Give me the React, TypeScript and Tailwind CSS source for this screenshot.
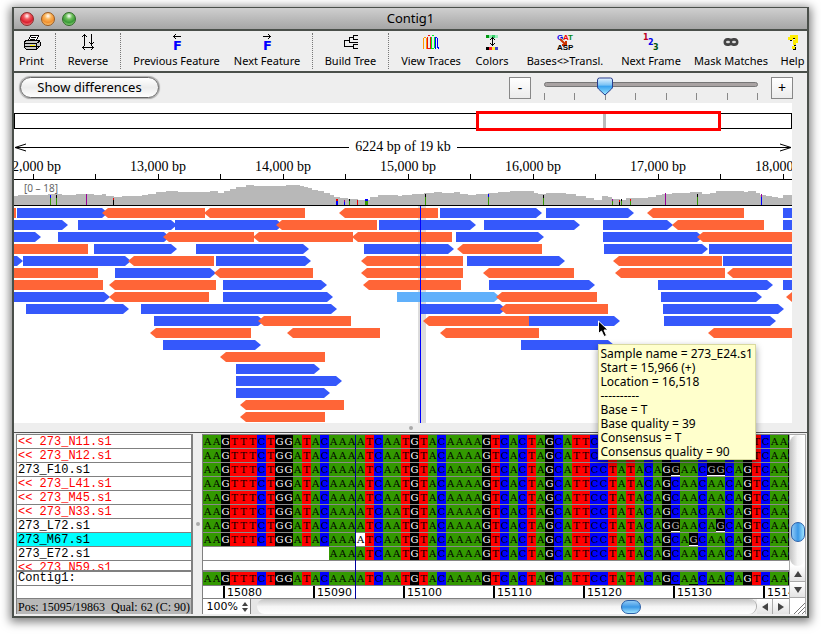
import React, { useState } from 'react'
import clsx from 'clsx';

const PrintIcon = () => (
  <svg width="18" height="17" viewBox="0 0 18 17" shapeRendering="crispEdges">
    <path d="M5 7 L8 1 H16 L13 7 Z" fill="#fff" stroke="#000" />
    <path d="M8 3.5 H13 M7 5.5 H12" stroke="#000" />
    <path d="M1 8 L4 6 H16 L17 8 V12 L14 15 H3 L1 13 Z" fill="#c9c9c9" stroke="#000" />
    <path d="M1 9.5 H13 L17 7 M13.5 9 V15 M2 12.5 H13 M14 12 H17" stroke="#000" fill="none" />
    <path d="M7 11.5 H12" stroke="#ffee00" />
  </svg>
);

const ReverseIcon = () => (
  <svg width="14" height="17" viewBox="0 0 14 17" shapeRendering="crispEdges" fill="none" stroke="#000">
    <path d="M3.5 0 V11 M2 1.5 H5 M1 2.5 H2 M5 2.5 H6" />
    <path d="M10.5 0 V11 M9 9.5 H12 M8 8.5 H9 M12 8.5 H13" />
    <path d="M1 13.5 H13 M2.5 12 V15 M11.5 12 V15 M3.5 11 V12 M3.5 15 V16 M10.5 11 V12 M10.5 15 V16" />
  </svg>
);

const FeatureIcon = ({ next }: { next?: boolean }) => (
  <svg className="overflow-visible" width="16" height="17" viewBox="0 0 16 17">
    <g shapeRendering="crispEdges" stroke="#000" fill="none">
      {next ? (
        <path d="M4 2.5 H12 M10.5 1 V4 M9.5 0 V1 M9.5 4 V5" />
      ) : (
        <path d="M4 2.5 H12 M5.5 1 V4 M6.5 0 V1 M6.5 4 V5" />
      )}
    </g>
    <text x="4" y="16" fill="#0000ff" fontFamily="DejaVu Sans, sans-serif" fontWeight="700" fontSize="13">F</text>
  </svg>
);

const TreeIcon = () => (
  <svg width="16" height="17" viewBox="0 0 16 17" shapeRendering="crispEdges" fill="none" stroke="#000">
    <path d="M15 1.5 H10.5 V5.5 H15 M10 3.5 H6.5 M15 10.5 H10.5 V14.5 H15 M10 12.5 H1.5 V6.5 H6 M6.5 3 V8.5 H15" />
  </svg>
);

const TracesIcon = () => (
  <svg width="18" height="17" viewBox="0 0 18 17" shapeRendering="crispEdges" fill="none">
    <path d="M1.5 15 V4 M2 3.5 H4 M4.5 4 V15" stroke="#ff9900" />
    <path d="M5.5 15 V3 M6 1.5 H8 M8.5 3 V15 M5 14.5 H8" stroke="#ee1111" />
    <path d="M9.5 15 V3 M10 1.5 H12 M12.5 3 V14 M9 14.5 H12" stroke="#00ee22" />
    <path d="M13.5 15 V4 M13 3.5 H15 M15.5 4 V14 M16.5 13 V15" stroke="#0000ff" />
  </svg>
);

const ColorsIcon = () => (
  <svg width="14" height="17" viewBox="0 0 14 17" shapeRendering="crispEdges">
    <path d="M1 1 h3 v3 h-3 z" fill="#009911" />
    <path d="M4 1 h3 v3 h-3 z" fill="#88eeaa" />
    <path d="M7 1 h3 v3 h-3 z" fill="#33cc66" />
    <path d="M10 1 h3 v3 h-3 z" fill="#99eebb" />
    <path d="M7.5 3 V12 M6 4.5 H9 M5 5.5 H6 M9 5.5 H10 M6 10.5 H9 M5 9.5 H6 M9 9.5 H10" stroke="#000" fill="none" />
    <path d="M1 13 h3 v3 h-3 z" fill="#000" />
    <path d="M4 13 h3 v3 h-3 z" fill="#ff2233" />
    <path d="M7 13 h3 v3 h-3 z" fill="#ffee33" />
    <path d="M10 13 h3 v3 h-3 z" fill="#4444cc" />
  </svg>
);

const TranslIcon = () => (
  <svg className="overflow-visible" width="18" height="17" viewBox="0 0 18 17" fontFamily="Liberation Sans, sans-serif" fontWeight="700" fontSize="8">
    <text x="1" y="6" fill="#0000ee">G</text>
    <text x="7" y="6" fill="#ee0000">A</text>
    <text x="12" y="6" fill="#008811">T</text>
    <path d="M4 5 L10 11 M10 7 V11 H6" stroke="#cc3300" strokeWidth="2" fill="none" />
    <text x="1" y="16" fill="#000">ASP</text>
  </svg>
);

const FrameIcon = () => (
  <svg className="overflow-visible" width="18" height="17" viewBox="0 0 18 17" fontFamily="DejaVu Sans, sans-serif" fontWeight="700" fontSize="8">
    <text x="1" y="6" fill="#bb0022">1</text>
    <text x="6" y="11" fill="#0000ee">2</text>
    <text x="11" y="16" fill="#005511">3</text>
  </svg>
);

const MaskIcon = () => (
  <svg width="16" height="17" viewBox="0 0 16 17">
    <path d="M4.5 4 C6.5 4 7 4.6 8 4.6 C9 4.6 9.5 4 11.5 4 C14 4 15.5 6 15.5 8 C15.5 10.5 14 12 11.5 12 C9.5 12 9 11.2 8 11.2 C7 11.2 6.5 12 4.5 12 C2 12 .5 10.5 .5 8 C.5 6 2 4 4.5 4 Z" fill="#444" />
    <ellipse cx="5" cy="8" rx="2" ry="1.3" fill="#ddd" />
    <ellipse cx="11" cy="8" rx="2" ry="1.3" fill="#ddd" />
  </svg>
);

const HelpIcon = () => (
  <svg width="14" height="17" viewBox="0 0 14 17" shapeRendering="crispEdges" fill="none">
    <path d="M3.5 6 V4 H5 V2.5 H10 V7 H8 V11" stroke="#000" strokeWidth="2" transform="translate(1 1)" />
    <path d="M7 13 h3 v3 h-3 z" fill="#000" />
    <path d="M3.5 6 V4 H5 V2.5 H10 V7 H8 V11" stroke="#ffee00" strokeWidth="3" />
    <path d="M6 12 h3 v3 h-3 z" fill="#ffee00" />
  </svg>
);

type Tool = { label: string; icon: React.ReactNode; width: string };

const toolGroups: Tool[][] = [
  [{ label: "Print", icon: <PrintIcon />, width: "w-[25px]" }],
  [{ label: "Reverse", icon: <ReverseIcon />, width: "w-[42px]" }],
  [
    { label: "Previous Feature", icon: <FeatureIcon />, width: "w-[89px]" },
    { label: "Next Feature", icon: <FeatureIcon next />, width: "w-[68px]" },
  ],
  [{ label: "Build Tree", icon: <TreeIcon />, width: "w-[53px]" }],
  [
    { label: "View Traces", icon: <TracesIcon />, width: "w-[62px]" },
    { label: "Colors", icon: <ColorsIcon />, width: "w-9" },
    { label: "Bases<>Transl.", icon: <TranslIcon />, width: "w-[86px]" },
    { label: "Next Frame", icon: <FrameIcon />, width: "w-[62px]" },
    { label: "Mask Matches", icon: <MaskIcon />, width: "w-[74px]" },
    { label: "Help", icon: <HelpIcon />, width: "w-[25px]" },
  ],
];

// map canvas is 778 units wide, 125 units for 1,000 bp
const MAP_WIDTH = 778;
const pct = (x: number) => `${(x / MAP_WIDTH) * 100}%`;

const axis = [12, 13, 14, 15, 16, 17, 18].map((kb, i) => ({ label: `${kb},000 bp`, x: 19 + i * 125 }));
const ticks = [19, 81, 144, 206, 269, 331, 394, 456, 519, 581, 644, 706, 769];

// x, height of the coverage plot
const coverage = [
  [0, 9], [4, 10], [20, 10], [34, 11], [48, 10], [62, 11], [80, 10], [88, 11], [92, 9], [100, 8], [108, 9],
  [120, 9], [128, 10], [134, 11], [142, 13], [152, 14], [164, 13], [184, 13], [196, 14], [204, 12], [210, 14],
  [216, 16], [222, 18], [232, 20], [240, 19], [256, 19], [272, 20], [286, 19], [290, 18], [294, 17], [298, 15],
  [304, 14], [310, 12], [316, 10], [320, 8], [326, 7], [334, 6], [344, 5], [350, 5], [356, 8], [364, 10], [384, 9],
  [388, 10], [398, 11], [410, 12], [420, 13], [428, 12], [440, 13], [446, 11], [454, 10], [462, 11], [474, 12], [484, 13],
  [496, 14], [512, 14], [520, 12], [524, 11], [532, 12], [552, 11], [562, 9], [572, 7], [580, 5], [588, 9],
  [594, 8], [598, 6], [606, 5], [612, 7], [622, 7], [634, 8], [642, 10], [648, 11], [658, 12], [676, 13],
  [688, 11], [696, 12], [702, 14], [730, 13], [734, 14], [742, 12], [746, 10], [752, 9], [758, 8], [764, 7],
  [769, 10], [778, 10],
];

const coveragePath =
  "M0 25 " +
  coverage.map(([x, h]) => `H${x} V${25 - h}`).join(" ") +
  " V25 Z";

// x, width, height, top color, base color
const conflicts: [number, number, number, string, string][] = [
  [36, 1, 10, "#0000ff", "#339900"],
  [42, 1, 10, "#000", "#339900"],
  [72, 1, 11, "#990099", "#990099"],
  [99, 1, 7, "#ee0000", "#000"],
  [322, 2, 6, "#ee0000", "#0000ff"],
  [330, 1, 5, "#990099", "#0000ff"],
  [335, 1, 6, "#000", "#339900"],
  [343, 1, 5, "#ee0000", "#ee0000"],
  [351, 3, 6, "#0000ff", "#339900"],
  [411, 1, 11, "#000", "#339900"],
  [474, 1, 11, "#0000ff", "#339900"],
  [529, 1, 10, "#000", "#339900"],
  [598, 1, 6, "#990099", "#339900"],
  [605, 1, 5, "#ee0000", "#000"],
  [607, 1, 6, "#000", "#339900"],
  [616, 1, 6, "#ee0000", "#339900"],
  [651, 1, 12, "#990099", "#990099"],
  [683, 1, 11, "#000", "#339900"],
  [747, 1, 11, "#990099", "#0000ff"],
];

// row, start, end, strand ("*" is the selected read)
const reads: [number, number, number, string][] = [
  [0, -80, 2, "-"], [0, 3, 94, "+"], [0, 88, 191, "-"], [0, 190, 291, "-"], [0, 325, 424, "-"], [0, 426, 528, "+"], [0, 532, 620, "+"], [0, 633, 730, "-"], [0, 769, 860, "+"],
  [1, -40, 54, "+"], [1, 64, 163, "+"], [1, 161, 269, "+"], [1, 262, 363, "-"], [1, 365, 462, "+"], [1, 470, 566, "+"], [1, 589, 659, "+"], [1, 658, 750, "-"], [1, 769, 860, "+"],
  [2, -50, 27, "+"], [2, 44, 156, "+"], [2, 149, 240, "-"], [2, 239, 339, "-"], [2, 338, 438, "-"], [2, 442, 530, "+"], [2, 589, 689, "+"], [2, 683, 790, "-"],
  [3, -40, 74, "-"], [3, 80, 163, "+"], [3, 182, 295, "+"], [3, 350, 440, "+"], [3, 443, 528, "-"], [3, 590, 694, "+"], [3, 695, 790, "+"],
  [4, -60, 9, "+"], [4, 9, 117, "+"], [4, 114, 200, "-"], [4, 202, 297, "+"], [4, 347, 449, "-"], [4, 453, 551, "+"], [4, 599, 708, "-"], [4, 709, 800, "+"],
  [5, -40, 84, "-"], [5, 101, 202, "+"], [5, 200, 299, "-"], [5, 347, 449, "-"], [5, 469, 560, "-"], [5, 601, 711, "-"], [5, 713, 800, "-"],
  [6, -40, 89, "-"], [6, 95, 202, "-"], [6, 209, 313, "+"], [6, 349, 447, "-"], [6, 475, 581, "+"], [6, 644, 759, "+"], [6, 769, 860, "+"],
  [7, -40, 96, "+"], [7, 95, 195, "-"], [7, 209, 319, "+"], [7, 383, 486, "*"], [7, 482, 583, "-"], [7, 647, 748, "+"], [7, 772, 860, "-"],
  [8, 12, 115, "+"], [8, 127, 323, "+"], [8, 407, 492, "+"], [8, 486, 594, "-"], [8, 649, 770, "+"],
  [9, 140, 250, "+"], [9, 244, 337, "-"], [9, 409, 515, "-"], [9, 515, 606, "+"], [9, 650, 762, "+"],
  [10, 136, 237, "-"], [10, 273, 366, "-"], [10, 426, 525, "-"], [10, 694, 800, "-"],
  [11, 149, 247, "+"], [11, 507, 600, "+"],
  [12, 206, 311, "-"],
  [13, 222, 306, "+"],
  [14, 222, 328, "+"],
  [15, 222, 316, "+"],
  [16, 226, 330, "-"],
  [17, 226, 311, "-"],
];

const readPoints = (row: number, a: number, b: number, strand: string) => {
  const y = row * 12 + 2;
  if (strand === "-") {
    return `${a},${y + 5} ${a + 6},${y} ${b},${y} ${b},${y + 10} ${a + 6},${y + 10}`;
  }
  return `${a},${y} ${b - 6},${y} ${b},${y + 5} ${b - 6},${y + 10} ${a},${y + 10}`;
};

const readColor: Record<string, string> = { "+": "#3558fb", "-": "#ff6537", "*": "#60b0fb" };

const CONSENSUS = "AAGTTTCTGGATACAAAATCAATGTACAAAAGTCACTAGCATTCCTATACAGCAACAACAGTCAAG";

type Sample = { name: string; reverse?: boolean; start: number; diffs?: number[] };

const samples: Sample[] = [
  { name: "273_N11.s1", reverse: true, start: 0 },
  { name: "273_N12.s1", reverse: true, start: 0 },
  { name: "273_F10.s1", start: 0, diffs: [52, 56, 57] },
  { name: "273_L41.s1", reverse: true, start: 0 },
  { name: "273_M45.s1", reverse: true, start: 0 },
  { name: "273_N33.s1", reverse: true, start: 0 },
  { name: "273_L72.s1", start: 0, diffs: [52, 57] },
  { name: "273_M67.s1", start: 0, diffs: [54] },
  { name: "273_E72.s1", start: 14 },
  { name: "273_N59.s1", reverse: true, start: 999 },
];

const SELECTED = "273_M67.s1";
const CURSOR_COL = 17;

const baseStyle: Record<string, string> = {
  A: "bg-[#339900] text-black",
  C: "bg-[#0000ff] text-black",
  G: "bg-black text-white",
  T: "bg-[#ff0000] text-black",
};

function Bases({ start = 0, diffs = [], marks = [], cursor }: { start?: number; diffs?: number[]; marks?: number[]; cursor?: boolean }) {
  return (
    <div className="flex h-[13px] font-['DejaVu_Serif','Liberation_Serif',serif] text-[10px] leading-[13px]">
      {CONSENSUS.split("").map((c, i) => {
        const base = diffs.includes(i) ? "G" : c;
        return (
          <span
            key={i}
            className={clsx(
              "w-[9px] shrink-0 text-center",
              i < start
                ? "bg-white"
                : cursor && i === CURSOR_COL
                ? "bg-white text-black"
                : diffs.includes(i)
                ? "border-b border-white bg-black text-[#bbb]"
                : baseStyle[base],
              marks.includes(i) && "border-b border-black"
            )}
          >
            {i < start ? "" : base}
          </span>
        );
      })}
    </div>
  );
}

function TitleBar() {
  return (
    <header className="relative flex h-[23px] items-center justify-center border-b-2 border-[#4a4f4a] bg-linear-to-b from-[#cfcfcf] to-[#a6a6a6]">
      <div className="absolute left-1.5 flex gap-[7px]">
        <button aria-label="Close" className="h-3.5 w-3.5 rounded-full border border-[#8a2a2a] bg-[radial-gradient(circle_at_50%_25%,#fff_0%,#f2595c_30%,#d92030_60%,#ffb0a8_100%)]" />
        <button aria-label="Minimize" className="h-3.5 w-3.5 rounded-full border border-[#9a5a20] bg-[radial-gradient(circle_at_50%_25%,#fff_0%,#fbb65c_30%,#f09030_60%,#ffe49a_100%)]" />
        <button aria-label="Zoom" className="h-3.5 w-3.5 rounded-full border border-[#2f6a28] bg-[radial-gradient(circle_at_50%_25%,#fff_0%,#6fc05c_30%,#3a9a38_60%,#b8f09a_100%)]" />
      </div>
      <h1 className="text-[13px] leading-none">Contig1</h1>
    </header>
  );
}

function Toolbar() {
  return (
    <nav className="flex h-[42px] gap-[11px] border-b-2 border-[#4a4f4a] bg-[#eeeeee] pl-[5px]">
      {toolGroups.map((group, g) => (
        <React.Fragment key={g}>
          {g > 0 && <span className="my-0.5 border-l border-dotted border-[#777]" />}
          <div className="flex gap-3">
            {group.map((tool) => (
              <button key={tool.label} className={clsx("flex flex-col items-center pt-[3px]", tool.width)}>
                {tool.icon}
                <span className="pt-0.5 text-[11px] leading-4 whitespace-nowrap">{tool.label}</span>
              </button>
            ))}
          </div>
        </React.Fragment>
      ))}
    </nav>
  );
}

function Controls() {
  const [zoom, setZoom] = useState(2);

  const squareButton = "h-[22px] w-[22px] shrink-0 border border-[#888] bg-linear-to-b from-white to-[#ececec] text-sm leading-none";

  return (
    <div className="flex h-[30px] items-start bg-[#eeeeee] pt-1 pr-3.5 pl-1.5">
      <button className="h-[21px] w-[139px] rounded-full border border-[#666] bg-linear-to-b from-white via-[#ececec] to-white text-[13px] leading-none shadow-[0_0_1px_1px_#aaa]">
        Show differences
      </button>
      <div className="ml-auto flex gap-[13px]">
        <button aria-label="Zoom out" className={squareButton} onClick={() => setZoom(Math.max(0, zoom - 1))}>-</button>
        <div className="relative w-[214px]">
          <input
            type="range"
            aria-label="Zoom"
            min={0}
            max={7}
            value={zoom}
            onChange={(e) => setZoom(Number(e.target.value))}
            className="mt-[5px] block h-[5px] w-full appearance-none rounded-full border border-[#777] bg-[#a9a3a3] [&::-webkit-slider-thumb]:opacity-0"
          />
          <div className="mt-1.5 flex h-[7px] justify-between">
            {[0, 1, 2, 3, 4, 5, 6, 7].map((t) => (
              <span key={t} className="w-px bg-[#888]" />
            ))}
          </div>
          <svg
            width="17"
            height="19"
            viewBox="0 0 17 19"
            className="pointer-events-none absolute top-0 -translate-x-1/2"
            style={{ left: `${(zoom / 7) * 100}%` }}
          >
            <defs>
              <linearGradient id="thumb" x1="0" y1="0" x2="0" y2="1">
                <stop offset="0" stopColor="#e4f3ff" />
                <stop offset=".4" stopColor="#7ec4f5" />
                <stop offset=".5" stopColor="#3ba4f0" />
                <stop offset="1" stopColor="#9fe8ff" />
              </linearGradient>
            </defs>
            <path d="M3 1 H14 Q16 1 16 3 V10 Q16 11 15 12 L8.5 18 L2 12 Q1 11 1 10 V3 Q1 1 3 1 Z" fill="url(#thumb)" stroke="#2a3f8f" />
          </svg>
        </div>
        <button aria-label="Zoom in" className={squareButton} onClick={() => setZoom(Math.min(7, zoom + 1))}>+</button>
      </div>
    </div>
  );
}

function Tooltip() {
  return (
    <div className="absolute top-[138px] left-3/4 z-10 border border-[#d9d9a0] bg-[#ffffcc] px-0.5 pt-0.5 text-xs leading-3.5 whitespace-nowrap shadow-[0_3px_7px_rgba(0,0,0,0.4)]">
      <p>Sample name = 273_E24.s1</p>
      <p>Start = 15,966 (+)</p>
      <p>Location = 16,518</p>
      <p>----------</p>
      <p>Base = T</p>
      <p>Base quality = 39</p>
      <p>Consensus = T</p>
      <p>Consensus quality = 90</p>
    </div>
  );
}

function ContigMap() {
  return (
    <section className="bg-[#eeeeee] pr-[15px] font-['Liberation_Serif',serif]">
      <div className="bg-white pt-2.5">
        <div className="relative h-4 border border-black">
          <div
            className="absolute -top-[3px] h-5 border-3 border-[#ff0000]"
            style={{ left: pct(462), width: pct(246) }}
          />
          <div className="absolute top-0 h-3.5 w-[3px] bg-[#bbb]" style={{ left: pct(590) }} />
        </div>

        <div className="mt-2.5 flex h-4 items-center gap-1.5 text-sm leading-4">
          <svg className="h-4 w-3 -mr-1.5 shrink-0" viewBox="0 0 12 16" fill="none" stroke="#000">
            <path d="M12 8.5 H1 M12 5 L1 8.5 L12 12" />
          </svg>
          <span className="mt-px h-px flex-1 bg-black" />
          <span>6224 bp of 19 kb</span>
          <span className="mt-px h-px flex-1 bg-black" />
          <svg className="h-4 w-3 -ml-1.5 shrink-0" viewBox="0 0 12 16" fill="none" stroke="#000">
            <path d="M0 8.5 H11 M0 5 L11 8.5 L0 12" />
          </svg>
        </div>

        <div className="relative h-[25px] overflow-hidden border-b border-black text-sm leading-4">
          {axis.map((a) => (
            <span key={a.label} className="absolute top-1 -translate-x-1/2 whitespace-nowrap" style={{ left: pct(a.x) }}>
              {a.label}
            </span>
          ))}
          {ticks.map((x) => (
            <span key={x} className="absolute bottom-0 h-[5px] w-px bg-black" style={{ left: pct(x) }} />
          ))}
        </div>

        <div className="relative">
          <svg className="block h-[26px] w-full" viewBox="0 0 778 26" preserveAspectRatio="none" shapeRendering="crispEdges">
            <path d={coveragePath} fill="#b8b8b8" />
            {conflicts.map(([x, w, h, top, base]) => (
              <g key={x}>
                <rect x={x} y={25 - h} width={w} height={h} fill={base} />
                <rect x={x} y={25 - h} width={w} height={Math.ceil(h / 4)} fill={top} />
              </g>
            ))}
            <rect x="0" y="25" width="778" height="1" fill="#000" />
          </svg>
          <span className="absolute top-0.5 left-2.5 font-['Noto_Sans',sans-serif] text-[10px] leading-3 text-[#666]">[0 – 18]</span>
        </div>

        <div className="relative font-['Noto_Sans',sans-serif]">
          <svg className="block h-[217px] w-full" viewBox="0 0 778 217" preserveAspectRatio="none">
            <rect x="404" y="0" width="8" height="217" fill="#dcdcdc" />
            {reads.map(([row, a, b, strand], i) => (
              <polygon key={i} points={readPoints(row, a, b, strand)} fill={readColor[strand]} />
            ))}
            <rect x="406" y="0" width="1" height="217" fill="#0000ff" />
          </svg>
          <svg className="absolute top-[114px] left-3/4" width="12" height="18" viewBox="0 0 12 18">
            <path d="M.5 1 V13.5 L3.5 11 L6 16.5 L8.5 15.5 L6 10 H10 Z" fill="#000" stroke="#fff" />
          </svg>
          <Tooltip />
        </div>
      </div>
    </section>
  );
}

function SampleList() {
  return (
    <aside className="flex w-[177px] shrink-0 flex-col border-t border-r-2 border-l border-[#808080] bg-white font-['Liberation_Mono',monospace] text-xs leading-3.5">
      <ul className="h-[135px] overflow-hidden">
        {samples.map((s) => (
          <li
            key={s.name}
            className={clsx(
              "h-3.5 border-b border-[#808080] pl-px",
              s.reverse && "text-[#ff0000]",
              s.name === SELECTED && "bg-[#00ffff]"
            )}
          >
            {s.reverse && "<< "}
            {s.name}
          </li>
        ))}
      </ul>
      <div className="h-4 border-t-2 border-b border-[#808080] pl-px leading-[13px]">Contig1:</div>
      <div className="h-[13px] border-b border-[#808080]" />
      <div className="h-[15px] bg-[#b8b8b8] pl-px font-['Liberation_Serif',serif] text-xs leading-[17px] whitespace-pre">
        Pos: 15095/19863  Qual: 62 (C: 90)
      </div>
    </aside>
  );
}

const scrollButton = "flex shrink-0 items-center justify-center bg-linear-to-b from-white to-[#e4e4e4] text-[#444]";

function Alignment() {
  return (
    <div className="flex min-w-0 flex-1 flex-col border-l border-[#808080]">
      <div className="relative overflow-hidden border-t border-[#808080] bg-white">
        <div className="h-[135px] overflow-hidden">
          {samples.map((s) => (
            <div key={s.name} className="h-3.5 overflow-hidden border-b border-[#8a8a8a]">
              {s.start < CONSENSUS.length && (
                <Bases start={s.start} diffs={s.diffs} cursor={s.name === SELECTED} />
              )}
            </div>
          ))}
        </div>
        <div className="h-4 overflow-hidden border-t-2 border-b border-[#808080]">
          <Bases marks={[52, 54, 56, 57]} />
        </div>
        <div className="flex h-[13px] border-b border-[#808080] pl-5 font-['DejaVu_Sans',sans-serif] text-[11px] leading-[13px]">
          {[15080, 15090, 15100, 15110, 15120, 15130, 15140].map((n) => (
            <span key={n} className="w-[90px] shrink-0 border-l-2 border-black pl-0.5">{n}</span>
          ))}
        </div>
        {/* cursor position across all the rows */}
        <div className="absolute top-0 bottom-0 left-[152px] w-px bg-[#0000a0]" />
      </div>

      <div className="flex h-[15px]">
        <button className="flex w-12 shrink-0 items-center justify-end gap-1 border-r border-[#808080] bg-white pr-0.5 font-['DejaVu_Sans',sans-serif] text-[11px] leading-none">
          100%
          <svg width="6" height="10" viewBox="0 0 6 10" fill="#444">
            <path d="M3 0 L6 4 H0 Z M3 10 L6 6 H0 Z" />
          </svg>
        </button>
        <div className="flex flex-1 items-center rounded-r-full border-r border-[#aaa] bg-[#e6e6e6] pl-1.5">
          <div className="flex h-full flex-1 items-center rounded-full bg-linear-to-b from-[#c4c4c4] via-[#f4f4f4] to-white">
            <span className="ml-[73%] h-3.5 w-5 rounded-full border border-[#2a5fa8] bg-linear-to-b from-[#8cc8f5] via-[#3a98e6] to-[#9fe4ff]" />
          </div>
        </div>
        <button aria-label="Scroll left" className={clsx(scrollButton, "w-4 border-r border-[#aaa]")}>
          <svg width="6" height="8" viewBox="0 0 6 8" fill="currentColor"><path d="M6 0 V8 L0 4 Z" /></svg>
        </button>
        <button aria-label="Scroll right" className={clsx(scrollButton, "w-4")}>
          <svg width="6" height="8" viewBox="0 0 6 8" fill="currentColor"><path d="M0 0 V8 L6 4 Z" /></svg>
        </button>
      </div>
    </div>
  );
}

function VerticalScroll() {
  return (
    <div className="flex w-[17px] shrink-0 flex-col border-x border-t border-[#aaa] bg-white">
      <div className="flex h-[131px] flex-col items-center rounded-full bg-linear-to-r from-[#c4c4c4] via-[#f4f4f4] to-white">
        <span className="mt-[87px] h-5 w-3.5 rounded-full border border-[#2a5fa8] bg-linear-to-r from-[#8cc8f5] via-[#3a98e6] to-[#9fe4ff]" />
      </div>
      <button aria-label="Scroll up" className={clsx(scrollButton, "h-4 border-b border-[#aaa]")}>
        <svg width="8" height="6" viewBox="0 0 8 6" fill="currentColor"><path d="M0 6 H8 L4 0 Z" /></svg>
      </button>
      <button aria-label="Scroll down" className={clsx(scrollButton, "h-4 border-b border-[#aaa]")}>
        <svg width="8" height="6" viewBox="0 0 8 6" fill="currentColor"><path d="M0 0 H8 L4 6 Z" /></svg>
      </button>
      <svg className="mt-auto ml-auto" width="12" height="12" viewBox="0 0 12 12" stroke="#777" fill="none">
        <path d="M1 12 L12 1 M5 12 L12 5 M9 12 L12 9" />
      </svg>
    </div>
  );
}

function App() {
  return (
    <div className="bg-white px-3 pt-[7px] pb-4 font-['Noto_Sans',sans-serif] text-black">
      <main className="border-x-2 border-t border-b-2 border-[#4a4f4a] shadow-[0_2px_9px_2px_rgba(0,0,0,0.5)]">
        <TitleBar />
        <Toolbar />
        <Controls />
        <ContigMap />
        <div className="flex h-[9px] items-center justify-center bg-[#eeeeee]">
          <span className="h-1 w-1 rounded-full bg-[#aaa]" />
        </div>
        <section className="flex border-t border-[#555] bg-[#eeeeee] pt-px pr-px pb-0.5 pl-0.5">
          <SampleList />
          <div className="flex w-[9px] shrink-0 items-center justify-center">
            <span className="h-1 w-1 rounded-full bg-[#aaa]" />
          </div>
          <Alignment />
          <VerticalScroll />
        </section>
      </main>
    </div>
  )
}

export default App
